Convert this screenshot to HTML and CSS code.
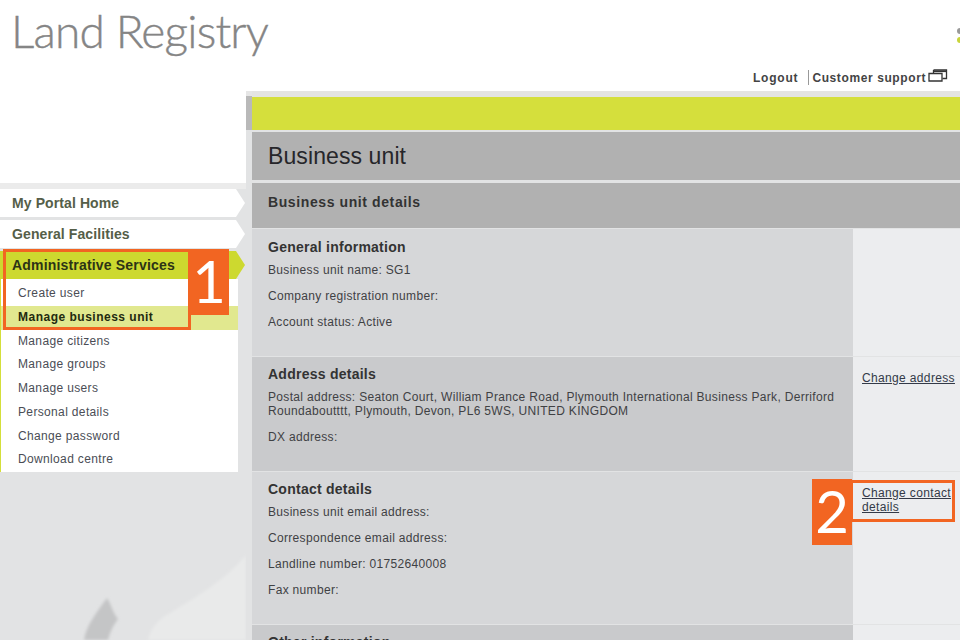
FILE: index.html
```html
<!DOCTYPE html>
<html lang="en">
<head>
<meta charset="utf-8">
<title>Business unit</title>
<link rel="stylesheet" href="styles.css">
</head>
<body>
<div class="page">
  <header class="header">
    <div class="logo">Land Registry</div>
    <span class="crest"></span>
    <nav class="toplinks">
      <a class="toplink logout">Logout</a>
      <a class="toplink support">Customer support
        <svg class="winicon" width="20" height="14" viewBox="0 0 20 14"><path d="M5.500 1h13v8.500h-4M5.500 1v3" fill="none" stroke="#333" stroke-width="1.300"/><path d="M5.500 2.300h13" stroke="#333" stroke-width="1.600"/><path d="M1 4.500h13v7.500h-13z" fill="#fff" stroke="#333" stroke-width="1.300"/></svg>
      </a>
    </nav>
  </header>
  <div class="layout">
    <aside class="sidebar">
      <svg class="map" width="246" height="549" viewBox="0 0 246 549">
        <defs><filter id="soft"><feGaussianBlur stdDeviation="1.500"/></filter></defs>
        <path d="M246 464C225 490 190 510 165 525C155 532 150 540 148 549H246Z" fill="#e9eaea" filter="url(#soft)"/>
        <path d="M84 549C86 535 96 522 107 507C112 515 112 520 118 528C112 536 110 542 108 549Z" fill="#c4c5c6" filter="url(#soft)"/>
        <path d="M0 92h246v6H0z" fill="#ebebeb"/>
      </svg>
      <nav class="nav">
        <a class="tab">My Portal Home</a>
        <a class="tab">General Facilities</a>
        <a class="tab tab-active">Administrative Services</a>
        <ul class="submenu">
          <li class="subitem">Create user</li>
          <li class="subitem subitem-active">Manage business unit</li>
          <li class="subitem">Manage citizens</li>
          <li class="subitem">Manage groups</li>
          <li class="subitem">Manage users</li>
          <li class="subitem">Personal details</li>
          <li class="subitem">Change password</li>
          <li class="subitem">Download centre</li>
        </ul>
      </nav>
    </aside>
    <main class="content">
      <div class="limebar"></div>
      <h1 class="title">Business unit</h1>
      <h2 class="subtitle">Business unit details</h2>
      <section class="row row-light row-general">
        <div class="cell">
          <h3 class="heading">General information</h3>
          <p class="line">Business unit name: SG1</p>
          <p class="line">Company registration number:</p>
          <p class="line">Account status: Active</p>
        </div>
        <div class="side"></div>
      </section>
      <section class="row row-dark row-address">
        <div class="cell">
          <h3 class="heading">Address details</h3>
          <p class="line">Postal address: Seaton Court, William Prance Road, Plymouth International Business Park, Derriford Roundaboutttt, Plymouth, Devon, PL6 5WS, UNITED KINGDOM</p>
          <p class="line">DX address:</p>
        </div>
        <div class="side"><a class="change">Change address</a></div>
      </section>
      <section class="row row-light row-contact">
        <div class="cell">
          <h3 class="heading">Contact details</h3>
          <p class="line">Business unit email address:</p>
          <p class="line">Correspondence email address:</p>
          <p class="line">Landline number: 01752640008</p>
          <p class="line">Fax number:</p>
        </div>
        <div class="side"><a class="change">Change contact details</a></div>
      </section>
      <section class="row row-dark row-other">
        <div class="cell">
          <h3 class="heading">Other information</h3>
        </div>
        <div class="side"></div>
      </section>
    </main>
  </div>
  <div class="mark mark-outline-1"></div>
  <div class="mark mark-num mark-num-1">1</div>
  <div class="mark mark-outline-2"></div>
  <div class="mark mark-num mark-num-2">2</div>
</div>
</body>
</html>
```

FILE: styles.css
```css
* { box-sizing: border-box; }
html, body { margin: 0; padding: 0; }
body { background: #fff; font-family: "Liberation Sans", Arial, sans-serif; color: #333; }
.page { position: relative; width: 960px; height: 640px; overflow: hidden; }

.header { height: 91px; background: #fff; display: flex; flex-direction: column; padding: 2px 0 0 11px; }
.logo { font-family: "Lato", "Liberation Sans", sans-serif; font-weight: 300; font-size: 46px; line-height: 58px; height: 58px; color: #858585; letter-spacing: -0.8px; -webkit-text-stroke: 0.4px #858585; }
.crest { position: absolute; left: 957px; top: 28px; width: 6px; height: 6px; border-radius: 50%; background: #999; box-shadow: 0 9px 0 #c8d43a; }
.toplinks { display: flex; justify-content: flex-end; align-items: center; height: 19px; margin-top: 8px; padding-right: 12px; font-size: 12px; font-weight: bold; color: #444; }
.toplink { display: flex; align-items: center; gap: 3px; white-space: nowrap; }
.logout { letter-spacing: 0.8px; }
.support { margin-left: 10px; padding-left: 3px; border-left: 1px solid #999; height: 15px; letter-spacing: 0.6px; }
.winicon { margin-top: -3px; margin-left: -1px; }

.layout { display: grid; grid-template-columns: 246px 714px; height: 549px; background: #e2e3e4; }
.sidebar { position: relative; background: linear-gradient(#fff 92px, #e2e3e4 92px); padding-top: 98px; }
.map { position: absolute; left: 0; top: 0; }
.nav { position: relative; display: flex; flex-direction: column; }
.tab { height: 28px; margin-bottom: 3px; width: 245px; padding-left: 12px; display: flex; align-items: center; font-size: 14px; font-weight: bold; color: #555e48; background: #fff; letter-spacing: 0.1px; clip-path: polygon(0 0, 236px 0, 100% 50%, 236px 100%, 0 100%); }
.tab-active { margin-bottom: 0; color: #2c3316; background: #cdd92f; letter-spacing: 0.18px; }
.submenu { list-style: none; margin: 0; padding: 3px 0 0; width: 238px; height: 193px; background: #fff; border-left: 1px solid #d4df3a; }
.subitem { height: 23.75px; padding-left: 17px; font-size: 12px; line-height: 23.75px; color: #4a4d55; letter-spacing: 0.35px; }
.subitem-active { background: #e1e88f; color: #232a10; font-weight: bold; letter-spacing: 0.5px; }

.content { padding-left: 6px; background: linear-gradient(#e6e6e6 5px, #b9b9b9 5px, #b9b9b9 39px, transparent 39px); }
.limebar { height: 39px; border-top: 6px solid #e4e4e2; background: #d5df3c; background-clip: padding-box; }
.title { height: 48px; margin: 2px 0 3px; padding-left: 16px; background: #b1b1b1; font-size: 23px; font-weight: normal; line-height: 48px; color: #26262a; letter-spacing: 0.1px; }
.subtitle { height: 45px; margin: 0 0 1px; padding-left: 16px; background: #b1b1b1; font-size: 14px; font-weight: bold; line-height: 39px; color: #333; letter-spacing: 0.6px; }
.row { display: grid; grid-template-columns: 601px 107px; margin-bottom: 1px; }
.row-general { height: 127px; }
.row-address { height: 114px; }
.row-contact { height: 152px; }
.row-other { height: 30px; }
.row-light .cell { background: #d6d7d9; }
.row-dark .cell { background: #c9cacc; }
.cell { padding: 9px 10px 0 16px; }
.row-general .cell { padding-top: 10px; }
.side { background: #ecedef; padding: 14px 0 0 9px; }
.heading { margin: 0 0 8px; font-size: 14px; line-height: 16px; font-weight: bold; color: #333; letter-spacing: 0.25px; }
.line { margin: 0 0 12px; font-size: 12px; line-height: 14px; color: #3f4144; letter-spacing: 0.32px; }
.change { display: block; font-size: 12px; line-height: 14px; color: #333a48; text-decoration: underline; letter-spacing: 0.35px; }

.mark { position: absolute; }
.mark-outline-1 { left: 3px; top: 249px; width: 188px; height: 81px; border: 3px solid #f26522; }
.mark-outline-2 { left: 850px; top: 480px; width: 105px; height: 42px; border: 3px solid #f26522; }
.mark-num { background: #f26522; color: #fff; font-family: "Lato", "Liberation Sans", sans-serif; font-weight: 400; font-size: 58px; line-height: 64px; text-align: center; width: 40px; height: 66px; }
.mark-num-1 { left: 189px; top: 249px; }
.mark-num-2 { left: 812px; top: 479px; }
```
